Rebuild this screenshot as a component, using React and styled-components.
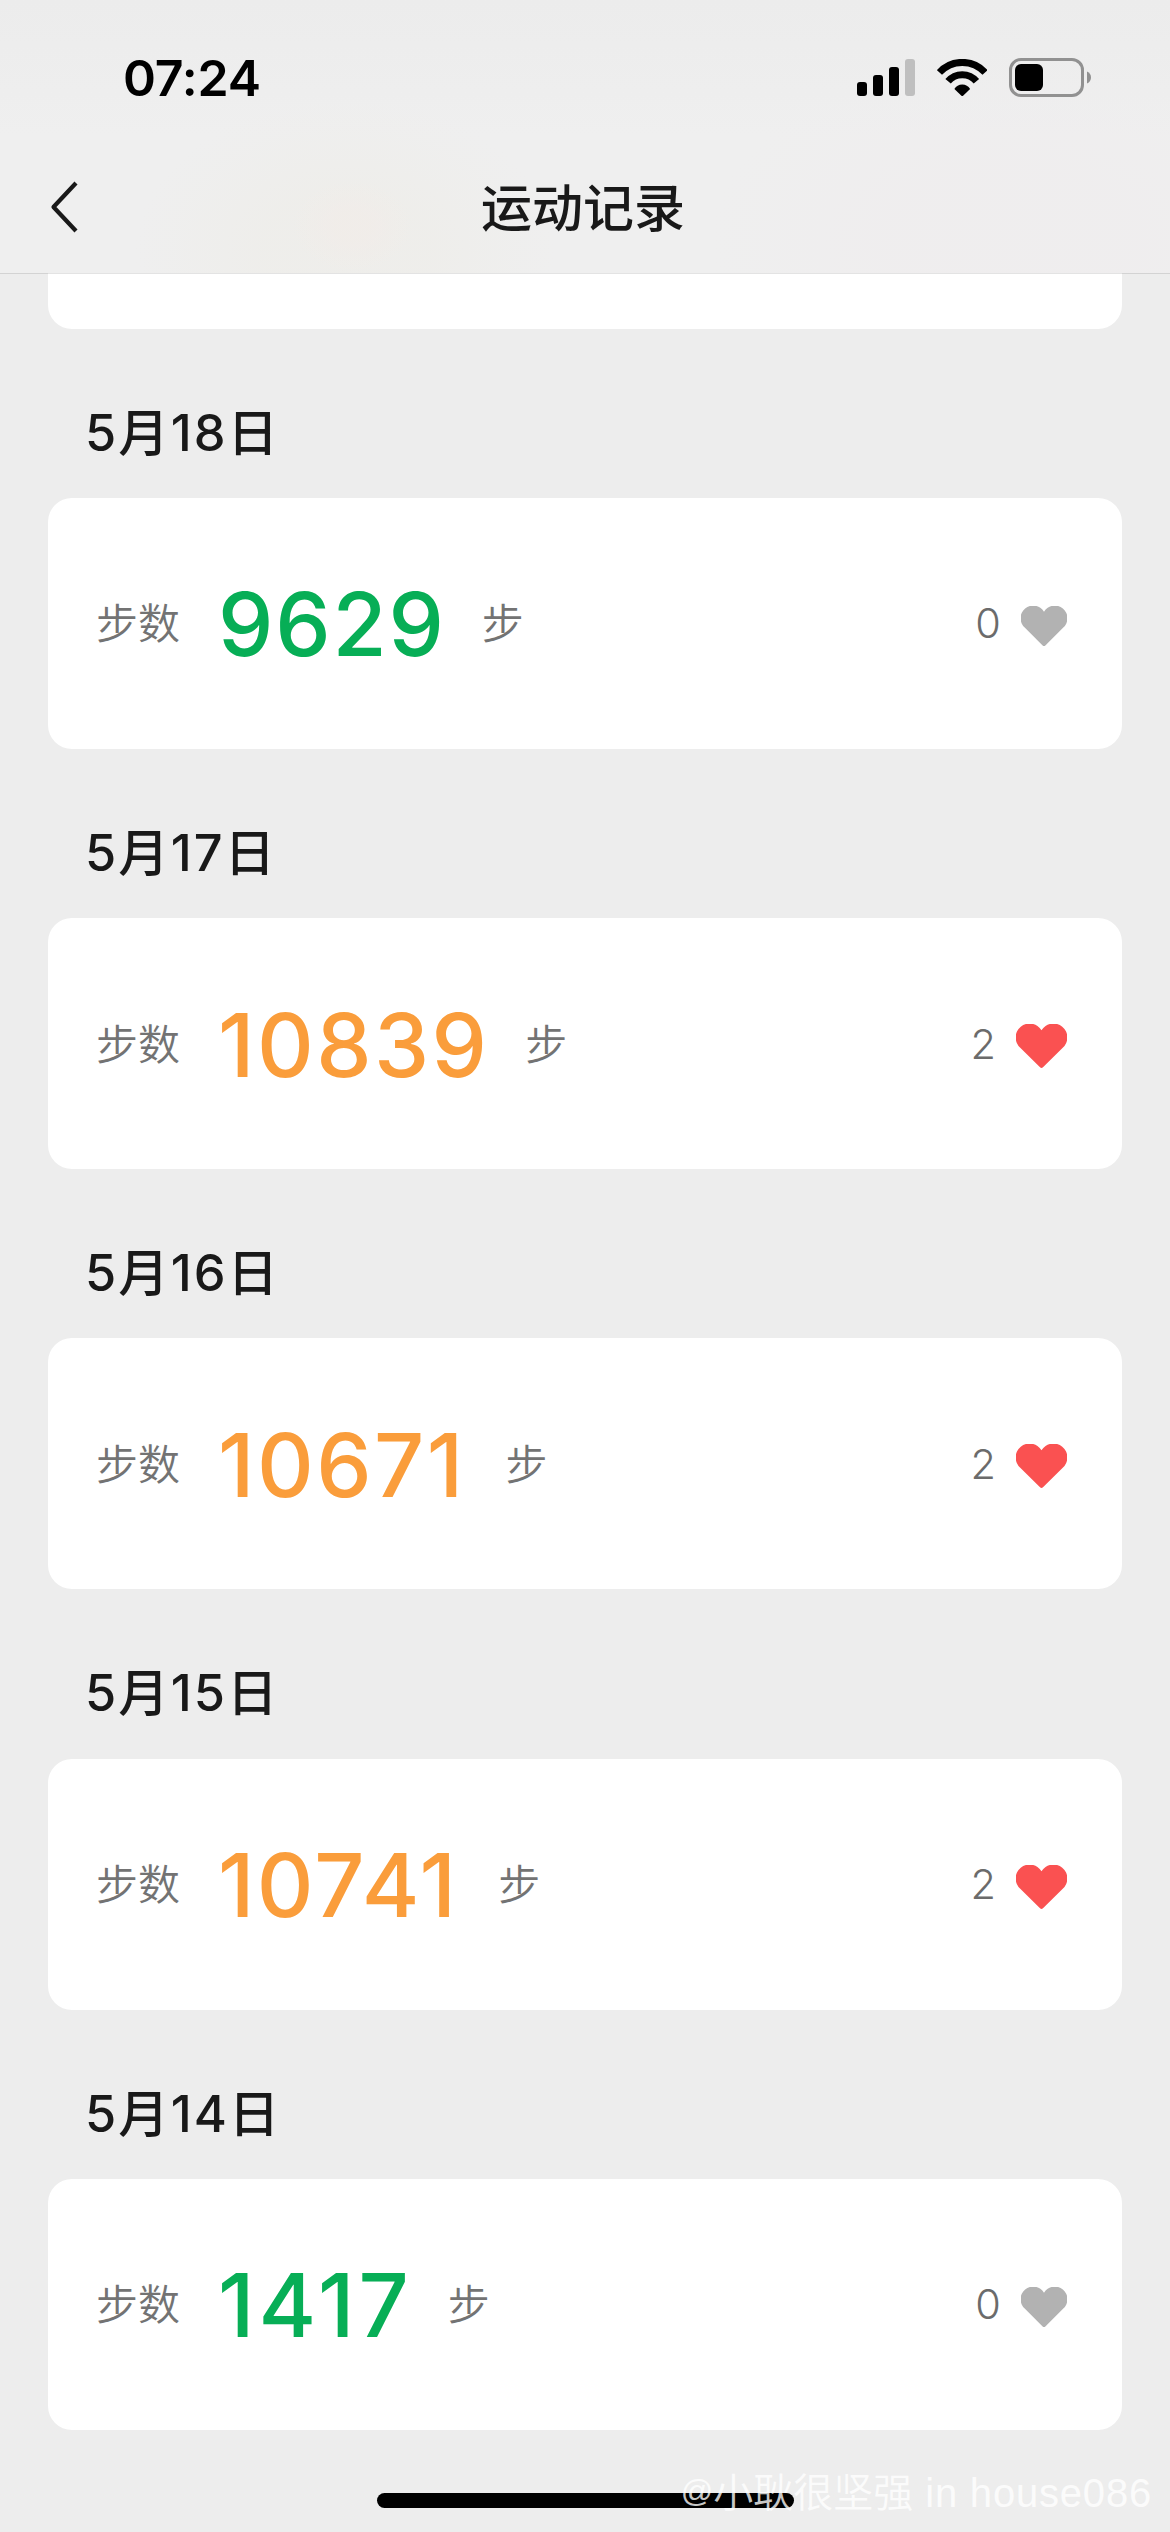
import React from 'react';
import styled, { createGlobalStyle } from 'styled-components';


const records = [
    { date: '5月18日', steps: 9629, likes: 0, tracking: 1.8, gap: 36 },
    { date: '5月17日', steps: 10839, likes: 2, tracking: 2.4, gap: 36 },
    { date: '5月16日', steps: 10671, likes: 2, tracking: 2.4, gap: 40 },
    { date: '5月15日', steps: 10741, likes: 2, tracking: 2.3, gap: 40 },
    { date: '5月14日', steps: 1417, likes: 0, tracking: 4, gap: 35 },
];

const GOAL = 10000;


const SignalIcon = () => (
    <svg width="58" height="37" viewBox="0 0 58 37">
        <rect x="0" y="23" width="10" height="14" rx="3" />
        <rect x="16" y="16" width="10" height="21" rx="3" />
        <rect x="32" y="8" width="10" height="29" rx="3" />
        <rect x="48" y="0" width="10" height="37" rx="3" fill="#bfbfbf" />
    </svg>
);

const WifiIcon = () => (
    <svg width="50.5" height="37" viewBox="0 0 151 111">
        <path d="M7 40.5A92.5 92.5 0 0 1 144 40.5" fill="none" stroke="#000" strokeWidth="21" />
        <path d="M33 67A55 55 0 0 1 118 67" fill="none" stroke="#000" strokeWidth="21" />
        <path d="M52 90A27 27 0 0 1 99 90L78 110Q75.5 112 73 110Z" />
    </svg>
);

const BatteryIcon = () => (
    <svg width="82" height="39" viewBox="0 0 82 39">
        <rect x="1.5" y="1.5" width="72" height="36" rx="10.5" fill="none" stroke="#919191" strokeWidth="3" />
        <rect x="6" y="6" width="28" height="27" rx="6" />
        <path d="M78 13.6C80.7 14.6 82 17 82 19.5S80.7 24.4 78 25.4Z" fill="#919191" />
    </svg>
);

const BackIcon = () => (
    <svg width="30" height="54" viewBox="0 0 30 54">
        <path d="M27 3L4.5 27L27 51" fill="none" stroke="#191919" strokeWidth="4.2" strokeLinejoin="round" />
    </svg>
);

const HeartIcon = ({ active }) => (
    <Heart $active={active} viewBox="0 0 153 133">
        <path d="M76.5 19A42 42 0 1 0 12.3 71.7L72 131Q76.5 135 81 131L140.7 71.7A42 42 0 1 0 76.5 19Z" />
    </Heart>
);

const StepRecord = props => {
    return (
        <section>
            <RecordDate>{props.data.date}</RecordDate>
            <Card>
                <Label>步数</Label>
                <Steps
                    $reached={props.data.steps >= GOAL}
                    $tracking={props.data.tracking}
                    $gap={props.data.gap}
                >
                    {props.data.steps}
                </Steps>
                <Label>步</Label>
                <Likes>
                    <span>{props.data.likes}</span>
                    <HeartIcon active={props.data.likes > 0} />
                </Likes>
            </Card>
        </section>
    )
};

const App = () => {
    return (
        <Screen>
            <GlobalStyle />
            <Header>
                <StatusBar>
                    <Time>07:24</Time>
                    <StatusIcons>
                        <SignalIcon />
                        <WifiIcon />
                        <BatteryIcon />
                    </StatusIcons>
                </StatusBar>
                <NavBar>
                    <BackIcon />
                    <Title>运动记录</Title>
                </NavBar>
            </Header>
            <RecordList>
                <CardTail />
                {records.map(item => <StepRecord key={item.date} data={item} />)}
            </RecordList>
            <Footer>
                <HomeIndicator />
                <Watermark><AtSign>@</AtSign>小耿很坚强<Latin> in house086</Latin></Watermark>
            </Footer>
        </Screen>
    )
};


const GlobalStyle = createGlobalStyle`
    * {
        box-sizing: border-box;
    }
    body {
        margin: 0;
        background: #ededed;
        font-family: "Inter", "Noto Sans CJK SC", sans-serif;
    }
    svg {
        display: block;
    }
`;

const Screen = styled.div`
    display: flex;
    flex-direction: column;
    width: 1170px;
    height: 2532px;
    overflow: hidden;
    background: #ededed;
`;

const Header = styled.header`
    position: relative;
    z-index: 1;
    flex: none;
    height: 273px;
    background:
        radial-gradient(ellipse 60px 46px at 352px 226px, rgba(242, 236, 232, 0.6) 30%, transparent),
        radial-gradient(ellipse 210px 150px at 345px 250px, rgba(238, 237, 233, 0.7) 40%, transparent),
        radial-gradient(ellipse 300px 180px at 1010px 240px, rgba(239, 237, 238, 0.8) 40%, transparent),
        linear-gradient(#ececec, #efefef 50%);
    box-shadow: 0 1px 0 rgba(0, 0, 0, 0.11);
`;

const StatusBar = styled.div`
    display: flex;
    justify-content: space-between;
    align-items: center;
    height: 141px;
    padding: 14px 79px 0 123px;
`;

const Time = styled.span`
    font-size: 50px;
    font-weight: 600;
    line-height: 60px;
    letter-spacing: -0.2px;
    color: #000;
`;

const StatusIcons = styled.div`
    display: flex;
    align-items: center;
    gap: 22px;
`;

const NavBar = styled.div`
    display: grid;
    grid-template-columns: 1fr auto 1fr;
    align-items: center;
    height: 132px;
    padding: 0 53px 0 49px;
`;

const Title = styled.h1`
    margin: 0;
    padding-top: 4px;
    font-size: 51px;
    font-weight: 500;
    line-height: 60px;
    color: #191919;
`;

const RecordList = styled.main`
    flex: none;
    padding: 0 48px;
`;

const CardTail = styled.div`
    height: 55.8px;
    border-radius: 0 0 24px 24px;
    background: #fff;
`;

const RecordDate = styled.h2`
    height: 169.2px;
    margin: 0;
    padding: 37px 0 0 37px;
    font-size: 50.5px;
    font-weight: 500;
    line-height: 133px;
    letter-spacing: 2px;
    color: #191919;
`;

const Card = styled.div`
    display: flex;
    align-items: center;
    height: 251px;
    padding: 0 55px 0 48px;
    border-radius: 24px;
    background: #fff;
`;

const Label = styled.span`
    padding-top: 2px;
    font-size: 42px;
    font-weight: 350;
    line-height: 60px;
    color: #737373;
`;

const Steps = styled.span`
    margin: 0 ${props => props.$gap}px 0 38px;
    padding-top: 2px;
    font-size: 88px;
    font-weight: 500;
    line-height: 100px;
    letter-spacing: ${props => props.$tracking}px;
    color: ${props => props.$reached ? '#fa9d3b' : '#07ae56'};
`;

const Likes = styled.div`
    display: flex;
    align-items: center;
    gap: 20px;
    margin-left: auto;
    font-size: 41.5px;
    font-weight: 300;
    line-height: 60px;
    color: #6b6b6b;
`;

const Heart = styled.svg`
    width: ${props => props.$active ? '51px' : '46px'};
    height: ${props => props.$active ? '44px' : '40px'};
    margin-top: 5px;
    fill: ${props => props.$active ? '#fa5151' : '#b2b2b2'};
`;

const Footer = styled.footer`
    position: relative;
    flex: 1;
    display: flex;
    justify-content: center;
    align-items: flex-end;
    padding-bottom: 24px;
`;

const HomeIndicator = styled.div`
    width: 417px;
    height: 15px;
    border-radius: 8px;
    background: #000;
`;

const Watermark = styled.span`
    position: absolute;
    right: 18px;
    bottom: 14px;
    font-family: "Liberation Sans", "Noto Sans CJK SC", sans-serif;
    font-size: 40px;
    font-weight: 350;
    line-height: 50px;
    white-space: nowrap;
    color: rgba(255, 255, 255, 0.8);
`;

const AtSign = styled.span`
    font-size: 32px;
    line-height: 1;
    vertical-align: 5px;
`;

const Latin = styled.span`
    letter-spacing: 0.8px;
`;


export default App;
